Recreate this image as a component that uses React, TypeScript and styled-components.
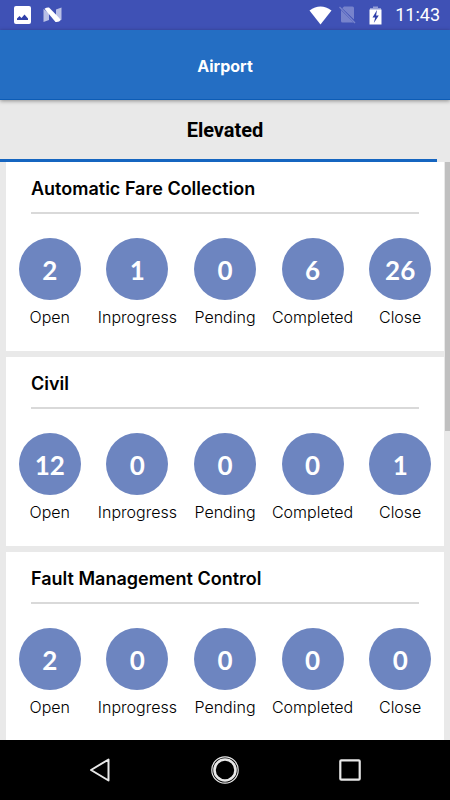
import React from "react";
import styled, { createGlobalStyle } from "styled-components";

const GlobalStyle = createGlobalStyle`
  * { box-sizing: border-box; }
  body { margin: 0; background: #e9e9e9; }
  button { font: inherit; color: inherit; border: 0; padding: 0; background: none; cursor: pointer; }
`;

const geometric = `"Century Gothic", Inter, sans-serif`;

const Screen = styled.div`
  display: flex;
  flex-direction: column;
  height: 100vh;
  overflow: hidden;
  background: #e9e9e9;
  color: #000;
  font-family: ${geometric};
`;

const StatusBar = styled.div`
  flex: none;
  display: flex;
  justify-content: space-between;
  align-items: center;
  height: 30px;
  padding: 0 10px 0 14px;
  background: #3f51b5;
  color: #fff;
  font: 400 18px/32px Roboto, sans-serif;
`;

const StatusGroup = styled.div<{ $gap: number }>`
  display: flex;
  align-items: center;
  gap: ${(p) => p.$gap}px;
`;

const Icon = styled.svg`
  display: block;
  flex: none;
`;

const AppBar = styled.header`
  flex: none;
  display: flex;
  align-items: center;
  justify-content: center;
  height: 70px;
  padding-top: 2px;
  background: #246ec3;
  border-bottom: 1px solid #0d5cb5;
  box-shadow: 0 1px 4px rgba(0, 0, 0, 0.4);
  z-index: 1;
`;

const Title = styled.h1`
  margin: 0;
  color: #fff;
  font-size: 16px;
  line-height: 24px;
  font-weight: 700;
`;

const TabBar = styled.nav`
  flex: none;
  height: 62px;
`;

const Tab = styled.button`
  display: block;
  width: calc(100% - 13px);
  height: 62px;
  padding-left: 13px;
  border-bottom: 3px solid #1565c0;
  font: 700 20px/24px Roboto, sans-serif;
`;

const Content = styled.main`
  position: relative;
  flex: 1;
  min-height: 0;
`;

const CardList = styled.div`
  display: flex;
  flex-direction: column;
  gap: 6px;
  height: 100%;
  padding: 0 6px;
  overflow-y: auto;
  scrollbar-width: none;
`;

const ScrollThumb = styled.div`
  position: absolute;
  top: 0;
  right: 0;
  width: 5px;
  height: 46.5%;
  background: #c0c0c0;
`;

const Card = styled.section`
  flex: none;
  height: 189px;
  background: #fff;
`;

const CardTitle = styled.h2`
  margin: 0 25px;
  padding: 15px 0 11px;
  border-bottom: 2px solid #d9d9d9;
  font-size: 18px;
  line-height: 24px;
  font-weight: 600;
`;

const Counters = styled.div`
  display: grid;
  grid-template-columns: repeat(5, 1fr);
  padding-top: 24px;
`;

const Counter = styled.button`
  display: flex;
  flex-direction: column;
  align-items: center;
  gap: 5px;
  min-width: 0;
`;

const Circle = styled.span`
  display: flex;
  align-items: center;
  justify-content: center;
  width: 62px;
  height: 62px;
  padding-top: 2px;
  border-radius: 50%;
  background: #6d85c0;
  color: #fff;
  font: 700 26px/32px Lato, sans-serif;
`;

const CounterLabel = styled.span`
  font-size: 16px;
  line-height: 24px;
  font-weight: 300;
`;

const NavBar = styled.footer`
  flex: none;
  display: flex;
  align-items: center;
  justify-content: center;
  gap: 85px;
  height: 60px;
  background: #000;
`;

const NavButton = styled.button`
  display: flex;
  align-items: center;
  justify-content: center;
  width: 40px;
  height: 40px;
`;

const labels = ["Open", "Inprogress", "Pending", "Completed", "Close"];

const departments = [
  { name: "Automatic Fare Collection", counts: [2, 1, 0, 6, 26] },
  { name: "Civil", counts: [12, 0, 0, 0, 1] },
  { name: "Fault Management Control", counts: [2, 0, 0, 0, 0] },
];

export default function App() {
  return (
    <>
      <GlobalStyle />
      <Screen>
        <StatusBar>
          <StatusGroup $gap={12}>
            <Icon width="17" height="18" viewBox="0 0 17 18">
              <rect width="17" height="18" rx="2" fill="#fff" />
              <path d="M3 14V12.5L5.5 10L7.5 12L10.5 8.5L14 12.5V14z" fill="#3040aa" />
            </Icon>
            <Icon width="19" height="16" viewBox="0 0 19 16">
              <path d="M0.5 2L6 6V13L0.5 15zM13 2.5L18.5 0.5V13L13 9z" fill="#b9c0e6" />
              <path d="M1.5 1.8Q4 0 6 0.5L18 12.8Q16 15.5 12.5 15z" fill="#fff" />
            </Icon>
          </StatusGroup>
          <StatusGroup $gap={7}>
            <Icon width="23" height="19" viewBox="0 0 23 19">
              <path d="M0.5 4.5Q11.5-3.5 22.5 4.5L11.5 18.5z" fill="#fff" />
            </Icon>
            <Icon width="17" height="18" viewBox="0 0 17 18">
              <path d="M5 0.5H13.5Q15 0.5 15 2V13.5L3.2 2.3zM2 4L14.5 16.5H3.5Q2 16.5 2 15z" fill="#7783cc" />
              <path d="M0.5 1L16 17" stroke="#7783cc" strokeWidth="1.3" />
            </Icon>
            <Icon width="25" height="19" viewBox="0 0 25 19">
              <path d="M10 0.5h5v2h-5zM7 2h11v3H7z" fill="#949dd6" />
              <path d="M6.5 3.5h12v15h-12z" fill="#fff" />
              <path d="M14 4L9.5 11.5h2.7L10.8 17l5-7.5h-2.7z" fill="#3040aa" />
            </Icon>
            <span>11:43</span>
          </StatusGroup>
        </StatusBar>
        <AppBar>
          <Title>Airport</Title>
        </AppBar>
        <TabBar>
          <Tab>Elevated</Tab>
        </TabBar>
        <Content>
          <CardList>
            {departments.map((d) => (
              <Card key={d.name}>
                <CardTitle>{d.name}</CardTitle>
                <Counters>
                  {labels.map((label, i) => (
                    <Counter key={label}>
                      <Circle>{d.counts[i]}</Circle>
                      <CounterLabel>{label}</CounterLabel>
                    </Counter>
                  ))}
                </Counters>
              </Card>
            ))}
          </CardList>
          <ScrollThumb />
        </Content>
        <NavBar>
          <NavButton aria-label="Back">
            <Icon width="22" height="26" viewBox="0 0 22 26">
              <path d="M19.5 2.5V23.5L2 13z" fill="none" stroke="#e8e8e8" strokeWidth="2" strokeLinejoin="round" />
            </Icon>
          </NavButton>
          <NavButton aria-label="Home">
            <Icon width="28" height="28" viewBox="0 0 28 28" fill="none" stroke="#e8e8e8">
              <circle cx="14" cy="14" r="13.2" strokeWidth="1.2" />
              <circle cx="14" cy="14" r="10.5" strokeWidth="2.6" />
            </Icon>
          </NavButton>
          <NavButton aria-label="Recents">
            <Icon width="22" height="22" viewBox="0 0 22 22">
              <rect x="1.3" y="1.3" width="19.4" height="19.4" rx="1" fill="none" stroke="#e8e8e8" strokeWidth="2.2" />
            </Icon>
          </NavButton>
        </NavBar>
      </Screen>
    </>
  );
}
